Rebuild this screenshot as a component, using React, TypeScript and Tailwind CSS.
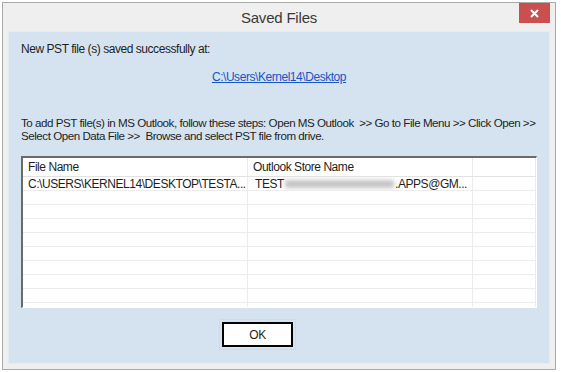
import React from "react";

const rows = Array.from({ length: 9 });

const Cell: React.FC<{ children?: React.ReactNode; className?: string }> = ({ children, className }) => (
    <div className={"border-r border-[#ececec] px-[5px] whitespace-nowrap overflow-hidden " + (className ?? "")}>
        {children}
    </div>
);

export default function App() {
    return (
        <div className="w-[561px] h-[372px] bg-white pl-[2px] pt-[2px] font-['Liberation_Sans',Arial,sans-serif] text-[12px] text-[#1e1e1e] tracking-[-0.45px]">
            <div className="w-[554px] h-[368px] border border-[#a9a9a9] bg-[#efefef] flex flex-col">
                {/* title bar */}
                <div className="relative h-[28px] flex items-center justify-center">
                    <span className="text-[15px] text-[#3a3a3a] tracking-[-0.2px] mt-[2px]">Saved Files</span>
                    <div className="absolute right-[5px] top-0 w-[31px] h-[20px] bg-[#c9504f] flex items-center justify-center">
                        <svg width="9" height="9" viewBox="0 0 9 9">
                            <path d="M1 1 L8 8 M8 1 L1 8" stroke="white" strokeWidth="2" />
                        </svg>
                    </div>
                </div>

                {/* client area */}
                <div className="flex-1 mx-[5px] mb-[5px] bg-[#d5e3f1] border border-[#e3ebf3] flex flex-col px-[12px]">
                    <div className="mt-[10px] leading-[14px]">New PST file (s) saved successfully at:</div>
                    <div className="mt-[14px] text-center leading-[14px]">
                        <span className="text-[#1a55c4] underline">C:\Users\Kernel14\Desktop</span>
                    </div>
                    <div className="mt-[32px] text-[11.6px] leading-[13px] whitespace-nowrap tracking-[-0.47px]">
                        To add PST file(s) in MS Outlook, follow these steps: Open MS Outlook &nbsp;&gt;&gt; Go to File Menu &gt;&gt; Click Open &gt;&gt;
                        <br />
                        Select Open Data File &gt;&gt;&nbsp; Browse and select PST file from drive.
                    </div>

                    {/* list view */}
                    <div className="mt-[14px] h-[152px] border-t-2 border-l-2 border-t-[#6a6a6a] border-l-[#6a6a6a] border-r border-b border-r-white border-b-white bg-white overflow-hidden">
                        <div className="grid grid-cols-[225px_225px_1fr] h-[19px] items-center border-b border-[#e2e2e2]">
                            <Cell className="h-full flex items-center">File Name</Cell>
                            <Cell className="h-full flex items-center">Outlook Store Name</Cell>
                            <Cell className="h-full" />
                        </div>
                        <div className="grid grid-cols-[225px_225px_1fr] h-[14px] border-b border-[#ececec]">
                            <Cell className="flex items-center">C:\USERS\KERNEL14\DESKTOP\TESTA...</Cell>
                            <Cell className="flex items-center">
                                <span className="ml-[2px]">TEST</span>
                                <span className="w-[112px] h-[8px] bg-[#c4c4c4] blur-[2px] mx-[1px]" />
                                <span>.APPS@GM...</span>
                            </Cell>
                            <Cell />
                        </div>
                        {rows.map((_, i) => (
                            <div key={i} className="grid grid-cols-[225px_225px_1fr] h-[14px] border-b border-[#ececec]">
                                <Cell />
                                <Cell />
                                <Cell />
                            </div>
                        ))}
                    </div>

                    <div className="mt-[11px] flex">
                        <div className="ml-[198px] p-[2px] border border-dotted border-[#c9d3dc]">
                            <button className="w-[71px] h-[25px] border-2 border-black bg-white text-[12px] flex items-center justify-center">
                                OK
                            </button>
                        </div>
                    </div>
                </div>
            </div>
        </div>
    );
}
